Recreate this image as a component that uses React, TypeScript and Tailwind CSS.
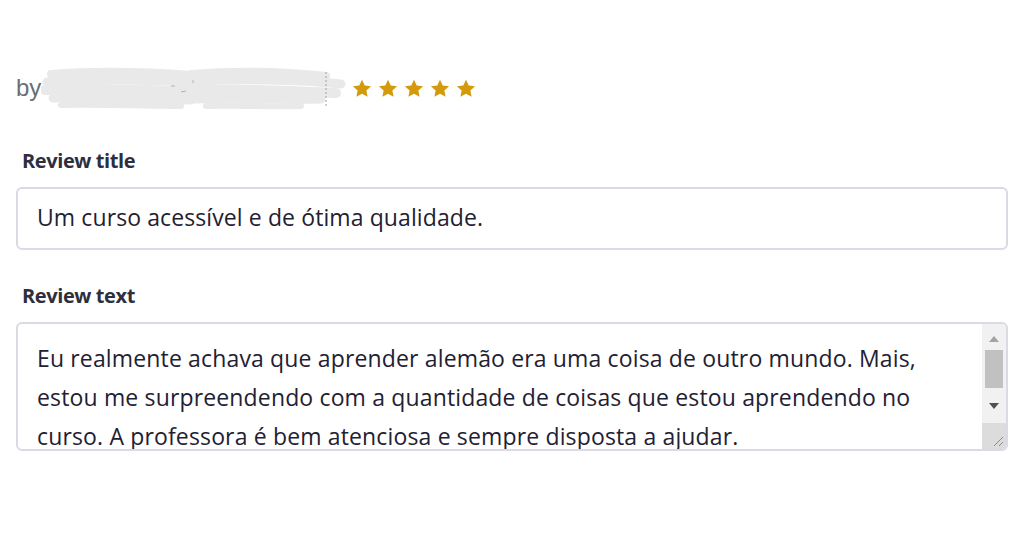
import React from "react";

const Star = () => (
  <svg width="20" height="19" viewBox="0 0 24 23" className="shrink-0">
    <path
      d="M12 0.8l3.3 7 7.7 0.9-5.7 5.3 1.5 7.6L12 17.8l-6.8 3.8 1.5-7.6L1 8.7l7.7-0.9z"
      fill="#d39b0c"
    />
  </svg>
);

const Scribble = () => (
  <svg width="305" height="44" viewBox="0 0 305 44" className="shrink-0">
    <g stroke="#e9e9ea" strokeLinecap="round" fill="none">
      <path d="M10 8 C60 4 110 6 150 9" strokeWidth="8" />
      <path d="M6 16 C70 12 120 14 170 17" strokeWidth="9" />
      <path d="M4 24 C60 22 120 24 160 26" strokeWidth="10" />
      <path d="M12 32 C60 30 110 33 150 34" strokeWidth="9" />
      <path d="M20 39 C60 38 100 40 140 40" strokeWidth="6" />
      <path d="M150 8 C200 4 250 6 285 10" strokeWidth="8" />
      <path d="M145 16 C200 12 260 14 300 18" strokeWidth="9" />
      <path d="M150 25 C200 22 250 25 295 27" strokeWidth="10" />
      <path d="M155 33 C200 31 240 34 280 33" strokeWidth="9" />
      <path d="M165 40 C200 39 230 41 260 40" strokeWidth="6" />
    </g>
    <path d="M285 6 L285 40" stroke="#9aa0a8" strokeWidth="1" strokeDasharray="2 2" />
    <path d="M130 20 l4 0 M140 26 l5 -1 M152 14 l0 3" stroke="#b0b4ba" strokeWidth="1" />
  </svg>
);

export default function App() {
  return (
    <div className="min-h-[538px] bg-white px-4 pt-[66px]">
      <div className="flex items-center">
        <span className="text-[24px] leading-none text-[#6a6f73] font-['Liberation_Sans',Arial,sans-serif]">
          by
        </span>
        <Scribble />
        <div className="ml-[6px] flex items-center gap-[6px]">
          <Star />
          <Star />
          <Star />
          <Star />
          <Star />
        </div>
      </div>

      <div className="mt-[41px] font-['Open_Sans',sans-serif]">
        <div className="pl-[6px] text-[20px] font-bold leading-[20px] text-[#2d2f3e] tracking-[-0.4px]">
          Review title
        </div>
        <div className="mt-[16px] flex h-[63px] w-[992px] items-center rounded-[6px] border-2 border-[#d9dae3] px-[19px] pb-[2px] text-[23px] tracking-[0.1px] text-[#1f2133]">
          Um curso acessível e de ótima qualidade.
        </div>

        <div className="mt-[36px] pl-[6px] text-[20px] font-bold leading-[20px] text-[#2d2f3e] tracking-[-0.4px]">
          Review text
        </div>
        <div className="mt-[16px] flex h-[129px] w-[992px] overflow-hidden rounded-[6px] border-2 border-[#d9dae3]">
          <div className="flex-1 overflow-hidden px-[19px] pt-[15px] text-[23px] leading-[39px] tracking-[0.15px] text-[#1f2133]">
            Eu realmente achava que aprender alemão era uma coisa de outro mundo. Mais,
            estou me surpreendendo com a quantidade de coisas que estou aprendendo no
            curso. A professora é bem atenciosa e sempre disposta a ajudar.
          </div>
          <div className="flex w-[24px] shrink-0 flex-col bg-[#f1f1f1]">
            <div className="flex h-[22px] items-end justify-center pb-[4px]">
              <svg width="10" height="6" viewBox="0 0 10 6">
                <path d="M0 6 L5 0 L10 6z" fill="#a3a3a3" />
              </svg>
            </div>
            <div className="mx-[3px] mt-[4px] h-[38px] bg-[#c1c1c1]" />
            <div className="flex h-[32px] items-center justify-center pt-[4px]">
              <svg width="10" height="6" viewBox="0 0 10 6">
                <path d="M0 0 L10 0 L5 6z" fill="#505050" />
              </svg>
            </div>
            <div className="mt-auto flex h-[26px] items-end justify-end bg-[#dcdcdc] pb-[2px] pr-[2px]">
              <svg width="12" height="12" viewBox="0 0 12 12">
                <path d="M11 2 L2 11 M11 7 L7 11" stroke="#8a8a8a" strokeWidth="1" />
              </svg>
            </div>
          </div>
        </div>
      </div>
    </div>
  );
}
